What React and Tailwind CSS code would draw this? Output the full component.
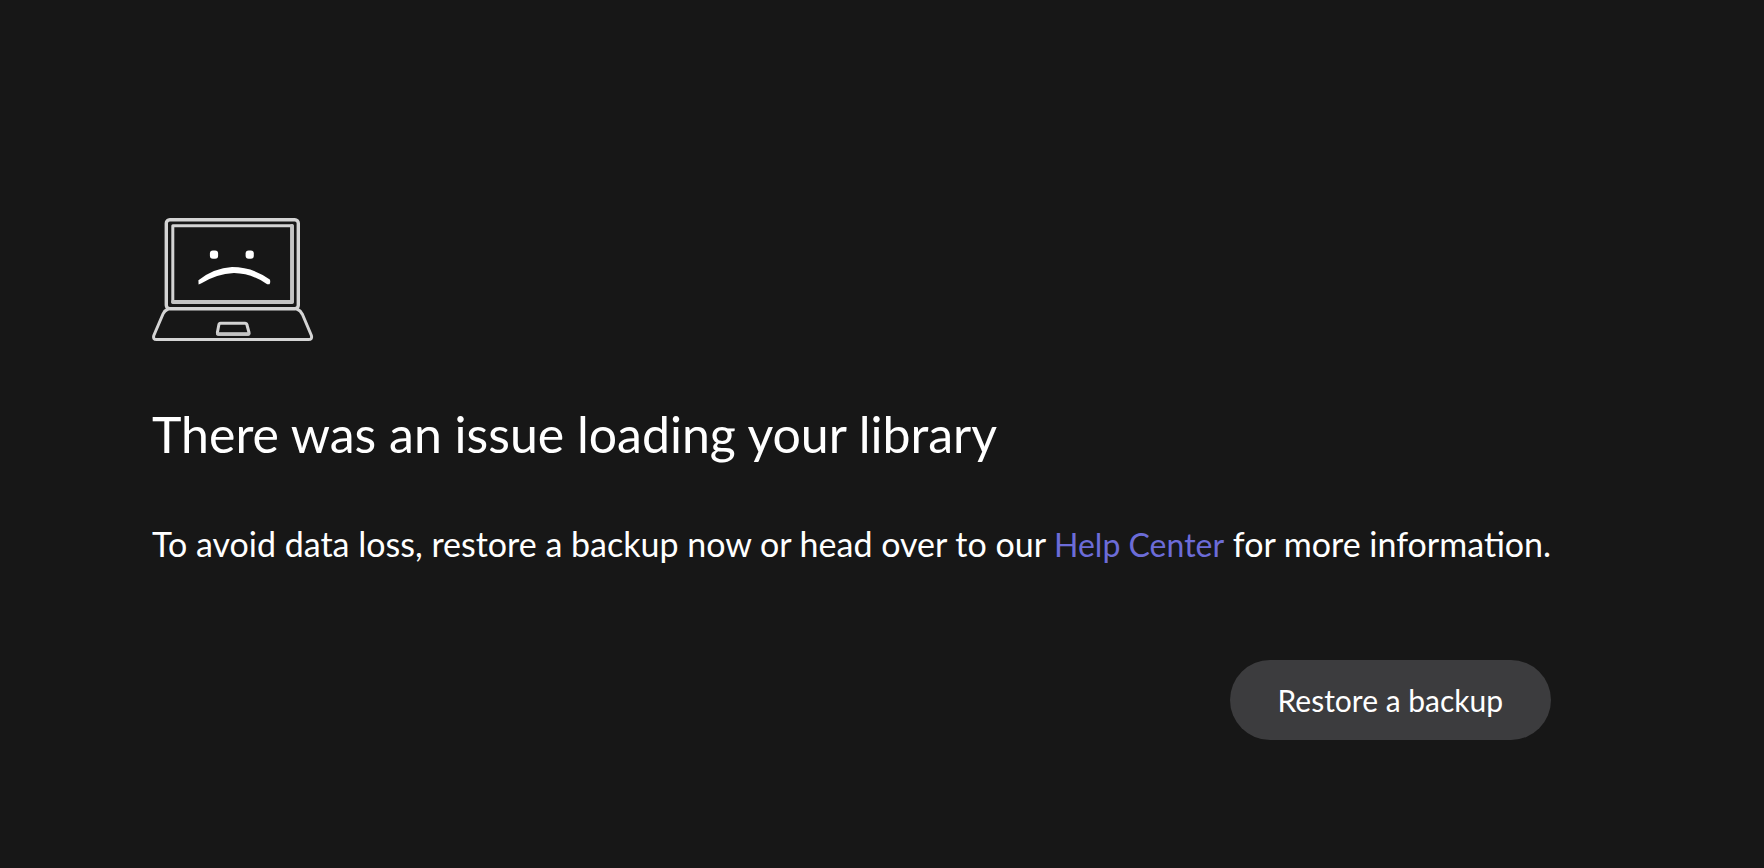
import React from "react";

const SadLaptopIcon = () => (
  <svg
    viewBox="0 0 162 124"
    className="h-[124px] w-[162px]"
    fill="none"
    stroke="#d4d4d4"
    strokeWidth="3"
    strokeLinecap="round"
    strokeLinejoin="round"
    aria-hidden="true"
  >
    <rect x="14.3" y="1.8" width="132" height="89" rx="3.5" strokeWidth="3.4" />
    <path d="M20.8 7.8 H140.2 V84 H20.8 Z" />
    <path d="M140 8 V84 H21" strokeWidth="3.8" stroke="#c4c4c4" />
    <path d="M16 91 Q12.5 92.5 11 96 L1.8 117.5 Q0.8 121.6 4.5 121.6 H156.5 Q160.4 121.6 159.4 117.5 L150.5 96.5 Q148.5 92.5 145 91" />
    <path d="M68.5 105.3 H93 Q94.6 105.3 95 107 L97 114.5 Q97.3 116.2 95.5 116.2 H67 Q65.2 116.2 65.4 114.5 L66.8 107 Q67.2 105.3 68.5 105.3 Z" />
    <path d="M65.8 116 H96.6" strokeWidth="3.6" stroke="#c4c4c4" />
    <path
      d="M46.4 62.2 Q62 50 80 49 Q101 49 117.8 61.6 Q118.8 64 117.5 66.2 Q115.5 66.6 114 65.4 Q99 55.4 82 55 Q64 55.9 49 65.6 L46.6 66.6 Z"
      fill="#fff"
      stroke="none"
    />
    <rect x="57.9" y="32.5" width="8.2" height="8.2" rx="3" fill="#fff" stroke="none" />
    <rect x="93.6" y="32.5" width="8.2" height="8.2" rx="3" fill="#fff" stroke="none" />
  </svg>
);

const App = () => {
  return (
    <main className="min-h-screen bg-[#171717] px-[152px] pt-[218px] pb-32 font-['Lato',sans-serif] text-white">
      <div className="flex w-fit flex-col items-start">
        <SadLaptopIcon />
        <h1 className="mt-[62px] text-[50px] leading-[60px]">
          There was an issue loading your library
        </h1>
        <p className="mt-15 text-[34px] leading-10">
          To avoid data loss, restore a backup now or head over to our{" "}
          <a href="#help-center" className="text-[32px] text-[#6c6cd8]">
            Help Center
          </a>{" "}
          for more information.
        </p>
        <button
          type="button"
          className="mt-[95px] h-20 self-end rounded-full bg-[#3c3c3e] px-12 text-[30px]"
        >
          Restore a backup
        </button>
      </div>
    </main>
  );
};

export default App;
